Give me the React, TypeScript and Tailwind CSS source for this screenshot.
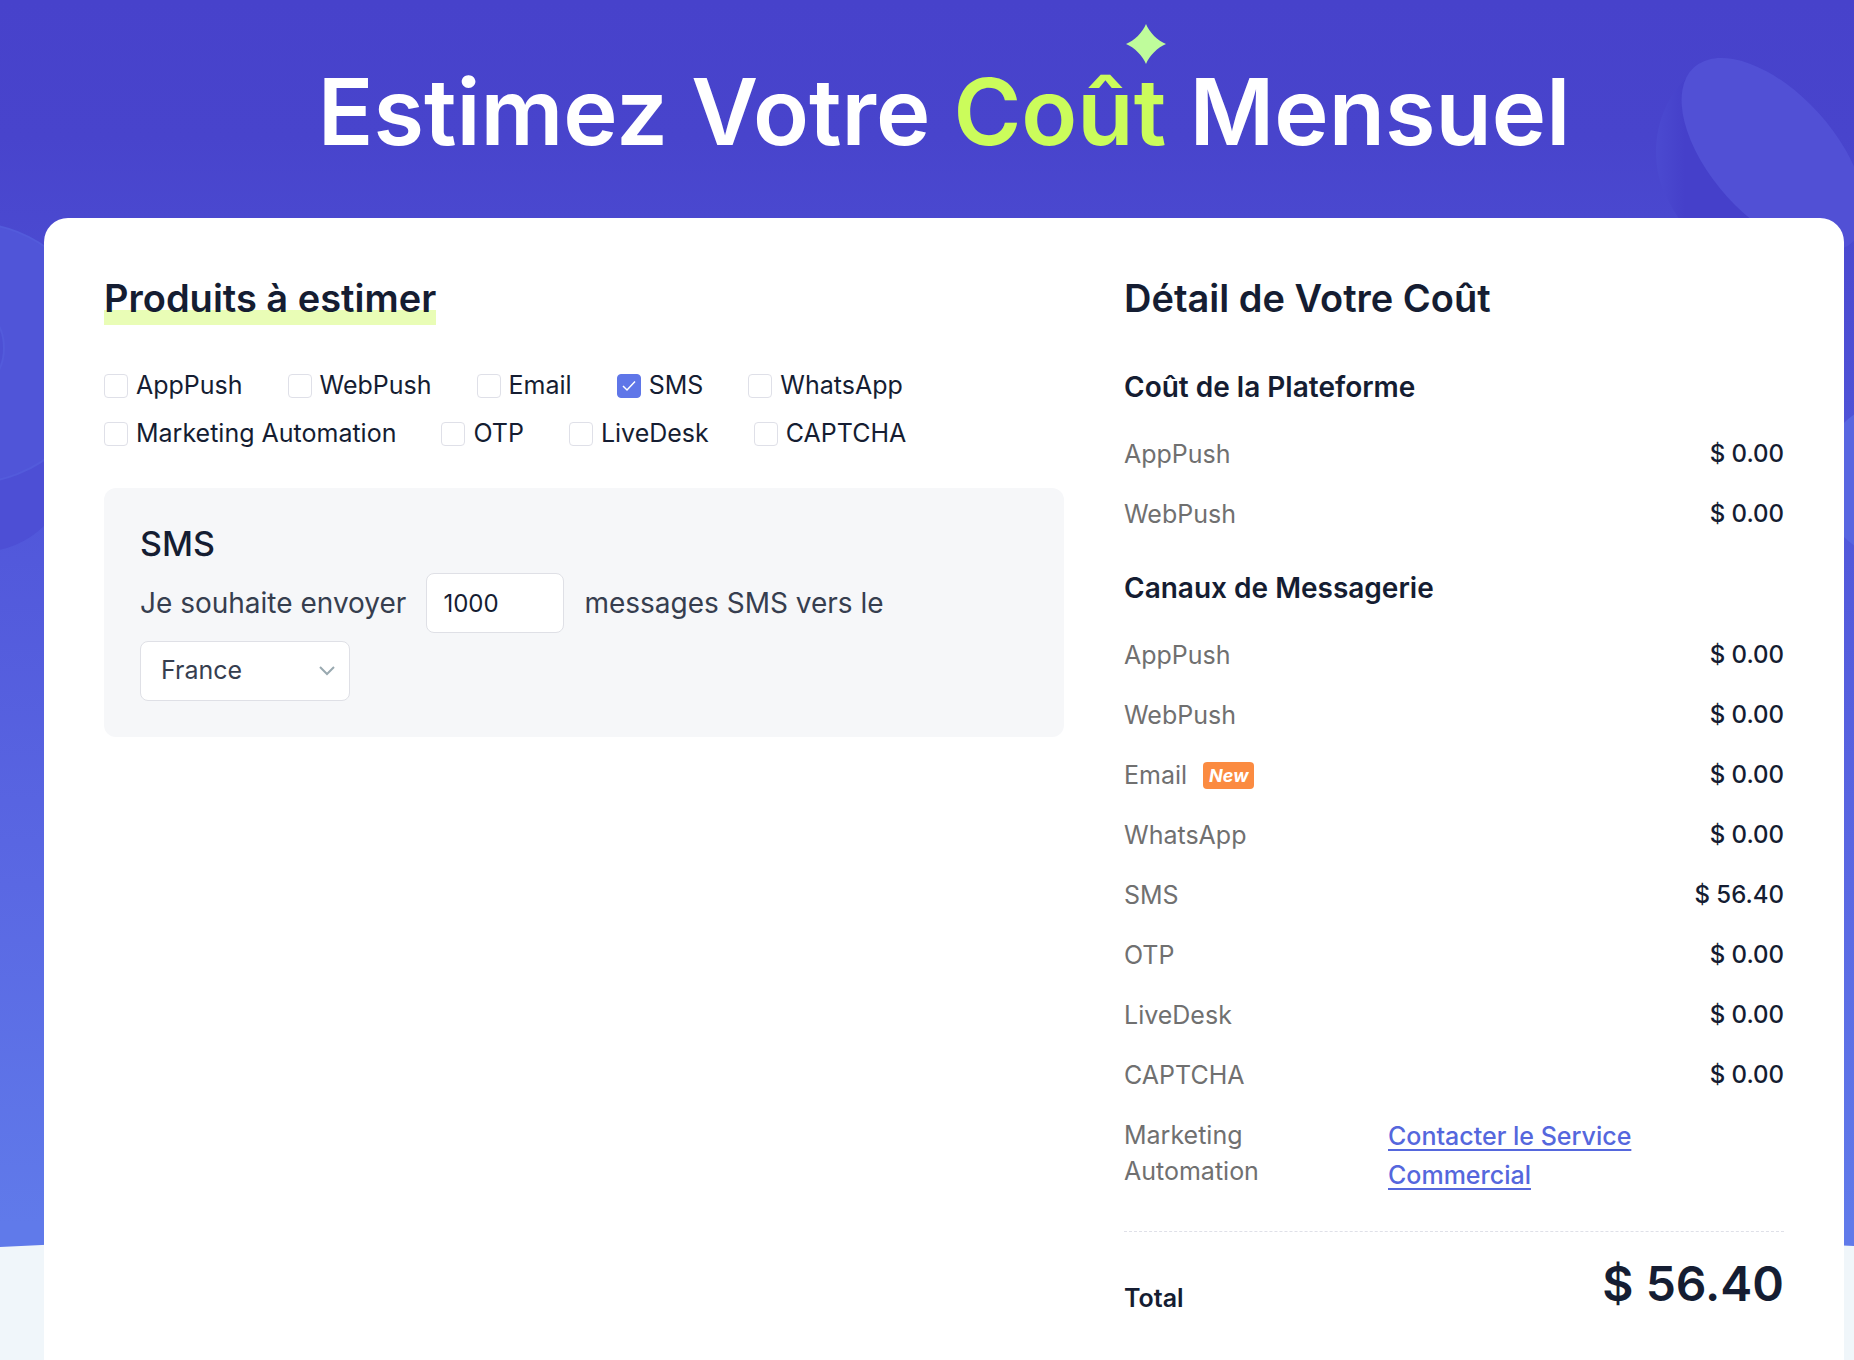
import { useState } from 'react';

const PRODUCTS = [
  ['AppPush', 'WebPush', 'Email', 'SMS', 'WhatsApp'],
  ['Marketing Automation', 'OTP', 'LiveDesk', 'CAPTCHA'],
];

const PLATFORM = ['AppPush', 'WebPush'];
const CHANNELS = ['AppPush', 'WebPush', 'Email', 'WhatsApp', 'SMS', 'OTP', 'LiveDesk', 'CAPTCHA'];

const SMS_PRICE = 0.0564;

function Background() {
  return (
    <>
      <svg className="absolute inset-0 w-full h-full" viewBox="0 0 1854 1360" preserveAspectRatio="none" aria-hidden="true">
        <defs>
          <linearGradient id="sky" x1="0" y1="0" x2="0" y2="1">
            <stop offset="0" stopColor="#4742cb" />
            <stop offset="0.1" stopColor="#4844cc" />
            <stop offset="0.35" stopColor="#5055d9" />
            <stop offset="0.65" stopColor="#5a68e3" />
            <stop offset="0.9" stopColor="#607aea" />
          </linearGradient>
        </defs>
        <rect width="1854" height="1360" fill="url(#sky)" />
        <path d="M0 1247Q927 1200 1854 1246V1360H0Z" fill="#f0f6fa" />
      </svg>

      <svg className="absolute left-0 top-0" width="120" height="600" viewBox="0 0 120 600" aria-hidden="true">
        <circle cx="-20" cy="460" r="92" fill="#4d4fd5" />
        <circle cx="-30" cy="353" r="130" fill="#5055d8" stroke="#535bdb" strokeWidth="2" />
        <ellipse cx="-30" cy="348" rx="34" ry="42" fill="#4d50d4" stroke="#535bdb" strokeWidth="2" />
      </svg>

      <svg className="absolute right-0 top-0" width="254" height="600" viewBox="1600 0 254 600" aria-hidden="true">
        <defs>
          <linearGradient id="rim" x1="0" y1="0" x2="1" y2="0">
            <stop offset="0" stopColor="#4b4ad0" />
            <stop offset="0.2" stopColor="#4540ca" />
          </linearGradient>
        </defs>
        <path d="M1700 68C1655 95 1645 160 1668 200C1690 245 1730 270 1770 280L1800 240L1720 90Z" fill="url(#rim)" />
        <ellipse cx="1773" cy="155" rx="118" ry="62" transform="rotate(48 1773 155)" fill="#5150d5" />
        <circle cx="1900" cy="480" r="80" fill="#5866e1" />
      </svg>
    </>
  );
}

function CostRow({ label, value }: { label: string; value: number }) {
  return (
    <li className="flex justify-between py-3 text-2xl leading-9">
      <span className="flex items-center text-[25px] text-[#707070]">
        {label}
        {label === 'Email' && (
          <em className="ml-4 rounded-sm bg-[#fb8b41] px-1.5 text-lg leading-[27px] font-bold text-white">New</em>
        )}
      </span>
      <span className="font-medium">$ {value.toFixed(2)}</span>
    </li>
  );
}

export default function App() {
  const [selected, setSelected] = useState<string[]>(['SMS']);
  const [messages, setMessages] = useState('1000');
  const [country, setCountry] = useState('France');

  const smsCost = selected.includes('SMS') ? (Number(messages) || 0) * SMS_PRICE : 0;

  const toggle = (name: string) => {
    setSelected(selected.includes(name) ? selected.filter((item) => item !== name) : [...selected, name]);
  };

  return (
    <div className="relative flex min-h-screen flex-col pl-11 pr-2.5 font-[Inter,'Open_Sans',sans-serif] text-[#151d32]">
      <Background />

      <h1 className="relative pt-[58px] pb-[52px] text-center text-[92px] leading-[108px] font-semibold text-white">
        Estimez Votre{' '}
        <span className="relative text-[#cbfc5b]">
          Coût
          <svg className="absolute right-0 -top-8" width="40" height="40" viewBox="0 0 40 40" fill="#bffc9b" aria-hidden="true">
            <path d="M20 0C23 8 32 17 40 20C32 23 23 32 20 40C17 32 8 23 0 20C8 17 17 8 20 0Z" />
          </svg>
        </span>{' '}
        Mensuel
      </h1>

      <main className="relative grid flex-1 grid-cols-[16fr_11fr] gap-[60px] rounded-t-3xl bg-white px-[60px] pt-[60px] pb-8">
        <section>
          <h2 className="text-[38px] leading-10 font-semibold">
            <span className="bg-linear-to-t from-[#e9fdb6] from-[15px] to-transparent to-[15px] pb-1">Produits à estimer</span>
          </h2>

          <div className="mt-11 flex flex-col">
            {PRODUCTS.map((row) => (
              <div key={row[0]} className="flex gap-[45px]">
                {row.map((name) => (
                  <label key={name} className="flex h-12 items-center gap-2 text-[25px]">
                    <span className="grid place-items-center">
                      <input
                        type="checkbox"
                        className="peer col-start-1 row-start-1 size-6 appearance-none rounded-sm border border-[#dfe0e8] bg-white checked:border-[#5f76e8] checked:bg-[#5f76e8]"
                        checked={selected.includes(name)}
                        onChange={() => toggle(name)}
                      />
                      <svg className="pointer-events-none invisible col-start-1 row-start-1 peer-checked:visible" width="14" height="12" viewBox="0 0 14 12" fill="none" stroke="#fff" strokeWidth="1.5">
                        <path d="M1 6L5 10L13 1.5" />
                      </svg>
                    </span>
                    {name}
                  </label>
                ))}
              </div>
            ))}
          </div>

          <div className="mt-[30px] rounded-xl bg-[#f6f7f9] px-9 pt-9 pb-9">
            <h3 className="text-[34px] leading-10 font-medium">SMS</h3>
            <div className="mt-[9px] flex flex-wrap items-center gap-x-5 gap-y-2 text-[28px] text-[#363e4f]">
              <label htmlFor="messages">Je souhaite envoyer</label>
              <input
                id="messages"
                type="text"
                className="h-[60px] w-[138px] rounded-lg border border-[#dfe0e6] bg-white px-4 text-2xl text-[#151d32] outline-none"
                value={messages}
                onChange={(event) => setMessages(event.target.value)}
              />
              <label htmlFor="country">messages SMS vers le</label>
              <div className="grid basis-full">
                <select
                  id="country"
                  className="col-start-1 row-start-1 h-[60px] w-[210px] appearance-none rounded-lg border border-[#dfe0e6] bg-white px-5 text-[25px] outline-none"
                  value={country}
                  onChange={(event) => setCountry(event.target.value)}
                >
                  <option>France</option>
                  <option>Belgique</option>
                  <option>Canada</option>
                </select>
                <svg className="pointer-events-none col-start-1 row-start-1 ml-[178px] self-center" width="18" height="10" viewBox="0 0 18 10" fill="none" stroke="#99a9b0" strokeWidth="2">
                  <path d="M2 1L9 8L16 1" />
                </svg>
              </div>
            </div>
          </div>
        </section>

        <section>
          <h2 className="text-[38px] leading-10 font-semibold">Détail de Votre Coût</h2>

          <h3 className="mt-[50px] mb-[18px] text-[28px] leading-[38px] font-semibold">Coût de la Plateforme</h3>
          <ul>
            {PLATFORM.map((label) => (
              <CostRow key={label} label={label} value={0} />
            ))}
          </ul>

          <h3 className="mt-[25px] mb-[18px] text-[28px] leading-[38px] font-semibold">Canaux de Messagerie</h3>
          <ul>
            {CHANNELS.map((label) => (
              <CostRow key={label} label={label} value={label === 'SMS' ? smsCost : 0} />
            ))}
            <li className="grid grid-cols-[2fr_3fr] py-3 text-[25px]">
              <span className="w-40 leading-9 text-[#707070]">Marketing Automation</span>
              <a href="#contact" className="w-[280px] leading-[39px] font-medium text-[#5567dd] underline decoration-2 underline-offset-4">
                Contacter le Service Commercial
              </a>
            </li>
          </ul>

          <div className="mt-6 flex items-end justify-between border-t border-dashed border-[#dfe0e8] pt-[22px]">
            <span className="text-[25px] leading-8 font-semibold">Total</span>
            <strong className="text-5xl leading-[60px] font-semibold">$ {smsCost.toFixed(2)}</strong>
          </div>
        </section>
      </main>
    </div>
  );
}
